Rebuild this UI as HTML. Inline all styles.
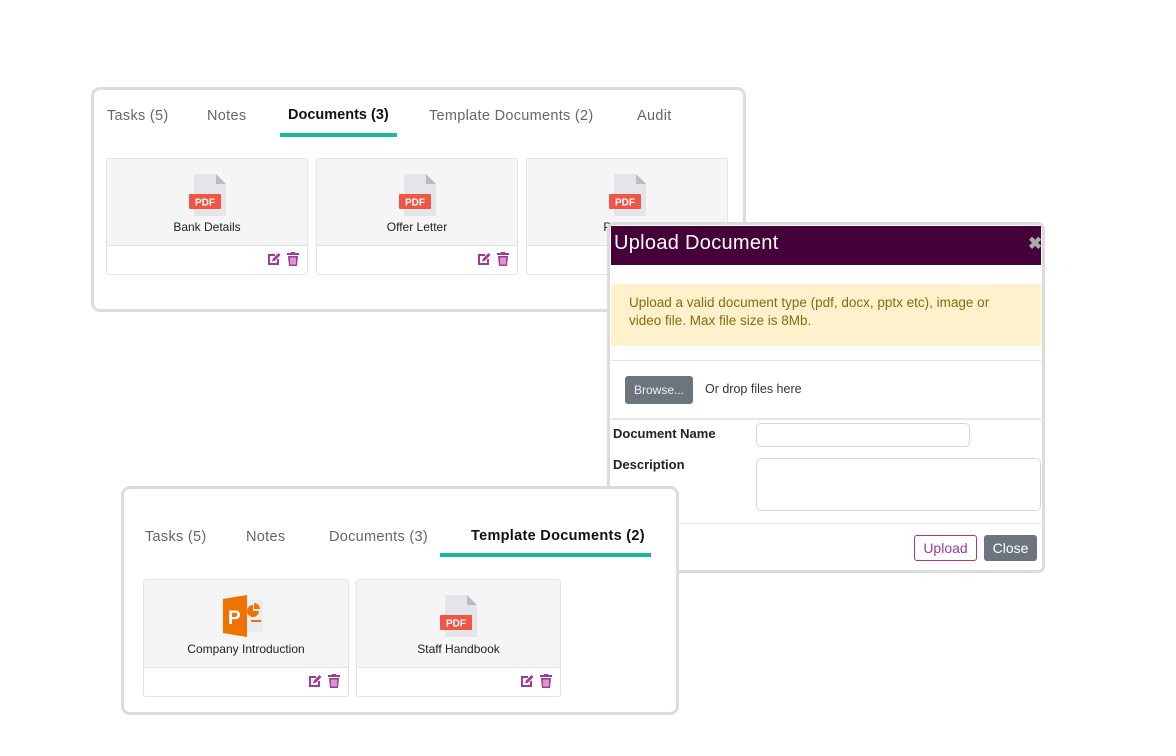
<!DOCTYPE html>
<html><head><meta charset="utf-8"><style>
*{box-sizing:border-box;margin:0;padding:0}
body{width:1176px;height:756px;background:#fff;position:relative;overflow:hidden;font-family:"Liberation Sans",Arial,sans-serif;color:#222}
.abs{position:absolute}
.panel{position:absolute;background:#fff;border:3px solid #dcdcdc;border-radius:9px}
.tab{position:absolute;font-size:14.5px;color:#666;white-space:nowrap;letter-spacing:0.3px}
.tab.b{color:#111;font-weight:bold;letter-spacing:0}
.ul{position:absolute;height:4px;background:#1ab99f}
.card{position:absolute;border:1px solid #e4e4e4;border-radius:3px;background:#fff;overflow:hidden}
.card .top{position:absolute;left:0;right:0;top:0;background:#f5f5f5;border-bottom:1px solid #e4e4e4}
.card .lbl{position:absolute;left:0;right:0;text-align:center;font-size:12px;color:#222}
.pdf{position:absolute;width:38px;height:42px}
.acts{position:absolute;right:8px;display:flex;gap:6px}
.btn{position:absolute;border-radius:3px;font-size:13px;text-align:center}
</style></head><body>

<svg width="0" height="0" style="position:absolute">
<defs>
<symbol id="pdf" viewBox="0 0 38 42"><path d="M5 0h22l10 10v32H5z" fill="#e3e5e8"/><path d="M27 0l10 10H27z" fill="#b8bcc2"/><rect x="0" y="20" width="32" height="15" rx="1" fill="#ef5646"/><text x="16" y="31.5" font-family="Liberation Sans,Arial" font-size="10" font-weight="bold" fill="#fff" text-anchor="middle">PDF</text></symbol>
<symbol id="ed" viewBox="0 0 14 14"><path d="M1 2h7v2H3v7h7V7h2v6H1z" fill="#a2399a"/><path d="M5 9.5l0.8-2.8L11.5 1l2 2-5.7 5.7z" fill="#a2399a"/></symbol>
<symbol id="tr" viewBox="0 0 12 14"><rect x="0" y="1" width="12" height="2" fill="#a2399a"/><rect x="4" y="0" width="4" height="2" fill="#a2399a"/><path d="M1 4h10l-1 10H2z" fill="#a2399a"/><rect x="3.5" y="5.5" width="1" height="7" fill="#fff"/><rect x="5.5" y="5.5" width="1" height="7" fill="#fff"/><rect x="7.5" y="5.5" width="1" height="7" fill="#fff"/></symbol>
</defs></svg>

<!-- Panel 1 -->
<div class="panel" style="left:91px;top:87px;width:655px;height:225px"></div>
<div class="tab" style="left:107px;top:108px">Tasks (5)</div>
<div class="tab" style="left:207px;top:108px">Notes</div>
<div class="tab b" style="left:288px;top:107px">Documents (3)</div>
<div class="ul" style="left:280px;top:133px;width:117px"></div>
<div class="tab" style="left:429px;top:108px">Template Documents (2)</div>
<div class="tab" style="left:637px;top:108px">Audit</div>

<div class="card" style="left:106px;top:158px;width:202px;height:117px"><div class="top" style="height:87px"></div>
<svg class="pdf" style="left:82px;top:15px"><use href="#pdf"/></svg>
<div class="lbl" style="top:61px">Bank Details</div>
<div class="acts" style="top:93px"><svg width="14" height="14"><use href="#ed"/></svg><svg width="12" height="14"><use href="#tr"/></svg></div></div>
<div class="card" style="left:316px;top:158px;width:202px;height:117px"><div class="top" style="height:87px"></div>
<svg class="pdf" style="left:82px;top:15px"><use href="#pdf"/></svg>
<div class="lbl" style="top:61px">Offer Letter</div>
<div class="acts" style="top:93px"><svg width="14" height="14"><use href="#ed"/></svg><svg width="12" height="14"><use href="#tr"/></svg></div></div>
<div class="card" style="left:526px;top:158px;width:202px;height:117px"><div class="top" style="height:87px"></div>
<svg class="pdf" style="left:82px;top:15px"><use href="#pdf"/></svg>
<div class="lbl" style="top:61px">Passport</div></div>

<!-- Modal -->
<div class="panel" style="left:607px;top:222px;width:438px;height:351px;border-radius:7px"></div>
<div class="abs" style="left:611px;top:226px;width:430px;height:39px;background:#45003a"></div>
<div class="abs" style="left:614px;top:232px;font-size:20px;color:#fff;letter-spacing:0.3px">Upload Document</div>
<div class="abs" style="left:1028px;top:234px;font-size:17px;color:#aaa;font-weight:bold">✖</div>
<div class="abs" style="left:611px;top:284px;width:430px;height:62px;background:#fef1cc"></div>
<div class="abs" style="left:629px;top:294px;font-size:13.5px;line-height:18px;color:#8a6a10;width:395px">Upload a valid document type (pdf, docx, pptx etc), image or video file. Max file size is 8Mb.</div>
<div class="abs" style="left:611px;top:360px;width:430px;height:1px;background:#e2e2e2"></div>
<div class="btn" style="left:625px;top:376px;width:68px;height:28px;background:#6c757d;color:#eef;line-height:28px;font-size:12px">Browse...</div>
<div class="abs" style="left:705px;top:382px;font-size:12.5px;color:#333">Or drop files here</div>
<div class="abs" style="left:611px;top:418px;width:430px;height:2px;background:#e6e6e6"></div>
<div class="abs" style="left:613px;top:426px;font-size:13px;font-weight:bold;color:#222">Document Name</div>
<div class="abs" style="left:756px;top:423px;width:214px;height:24px;border:1px solid #d6d6d6;border-radius:5px"></div>
<div class="abs" style="left:613px;top:457px;font-size:13px;font-weight:bold;color:#222">Description</div>
<div class="abs" style="left:756px;top:458px;width:285px;height:53px;border:1px solid #d6d6d6;border-radius:5px"></div>
<div class="abs" style="left:611px;top:523px;width:430px;height:1px;background:#e6e6e6"></div>
<div class="btn" style="left:914px;top:535px;width:63px;height:26px;border:1px solid #a2399a;color:#a2399a;line-height:24px;font-size:14px">Upload</div>
<div class="btn" style="left:984px;top:535px;width:53px;height:26px;background:#6c757d;color:#fff;line-height:26px;font-size:14px">Close</div>

<!-- Panel 2 -->
<div class="panel" style="left:121px;top:486px;width:558px;height:229px"></div>
<div class="tab" style="left:145px;top:529px">Tasks (5)</div>
<div class="tab" style="left:246px;top:529px">Notes</div>
<div class="tab" style="left:329px;top:529px">Documents (3)</div>
<div class="tab b" style="left:471px;top:528px;letter-spacing:0.3px">Template Documents (2)</div>
<div class="ul" style="left:440px;top:553px;width:211px"></div>

<div class="card" style="left:143px;top:579px;width:206px;height:118px"><div class="top" style="height:88px"></div>
<svg class="abs" style="left:79px;top:15px" width="42" height="42" viewBox="0 0 42 42"><rect x="14" y="5" width="26" height="32" fill="#e9ecef"/><path d="M0 4l24-4v42L0 38z" fill="#f07200"/><text x="5" y="29" font-family="Liberation Sans,Arial" font-size="19" font-weight="bold" fill="#fff">P</text><path d="M30 10a6 6 0 1 0 6 6h-6z" fill="#f07200"/><path d="M31 8a6 6 0 0 1 6 6h-6z" fill="#f07200"/><rect x="28" y="25" width="10" height="2" fill="#f07200"/></svg>
<div class="lbl" style="top:62px">Company Introduction</div>
<div class="acts" style="top:94px"><svg width="14" height="14"><use href="#ed"/></svg><svg width="12" height="14"><use href="#tr"/></svg></div></div>
<div class="card" style="left:356px;top:579px;width:205px;height:118px"><div class="top" style="height:88px"></div>
<svg class="pdf" style="left:83px;top:15px"><use href="#pdf"/></svg>
<div class="lbl" style="top:62px">Staff Handbook</div>
<div class="acts" style="top:94px"><svg width="14" height="14"><use href="#ed"/></svg><svg width="12" height="14"><use href="#tr"/></svg></div></div>

</body></html>
